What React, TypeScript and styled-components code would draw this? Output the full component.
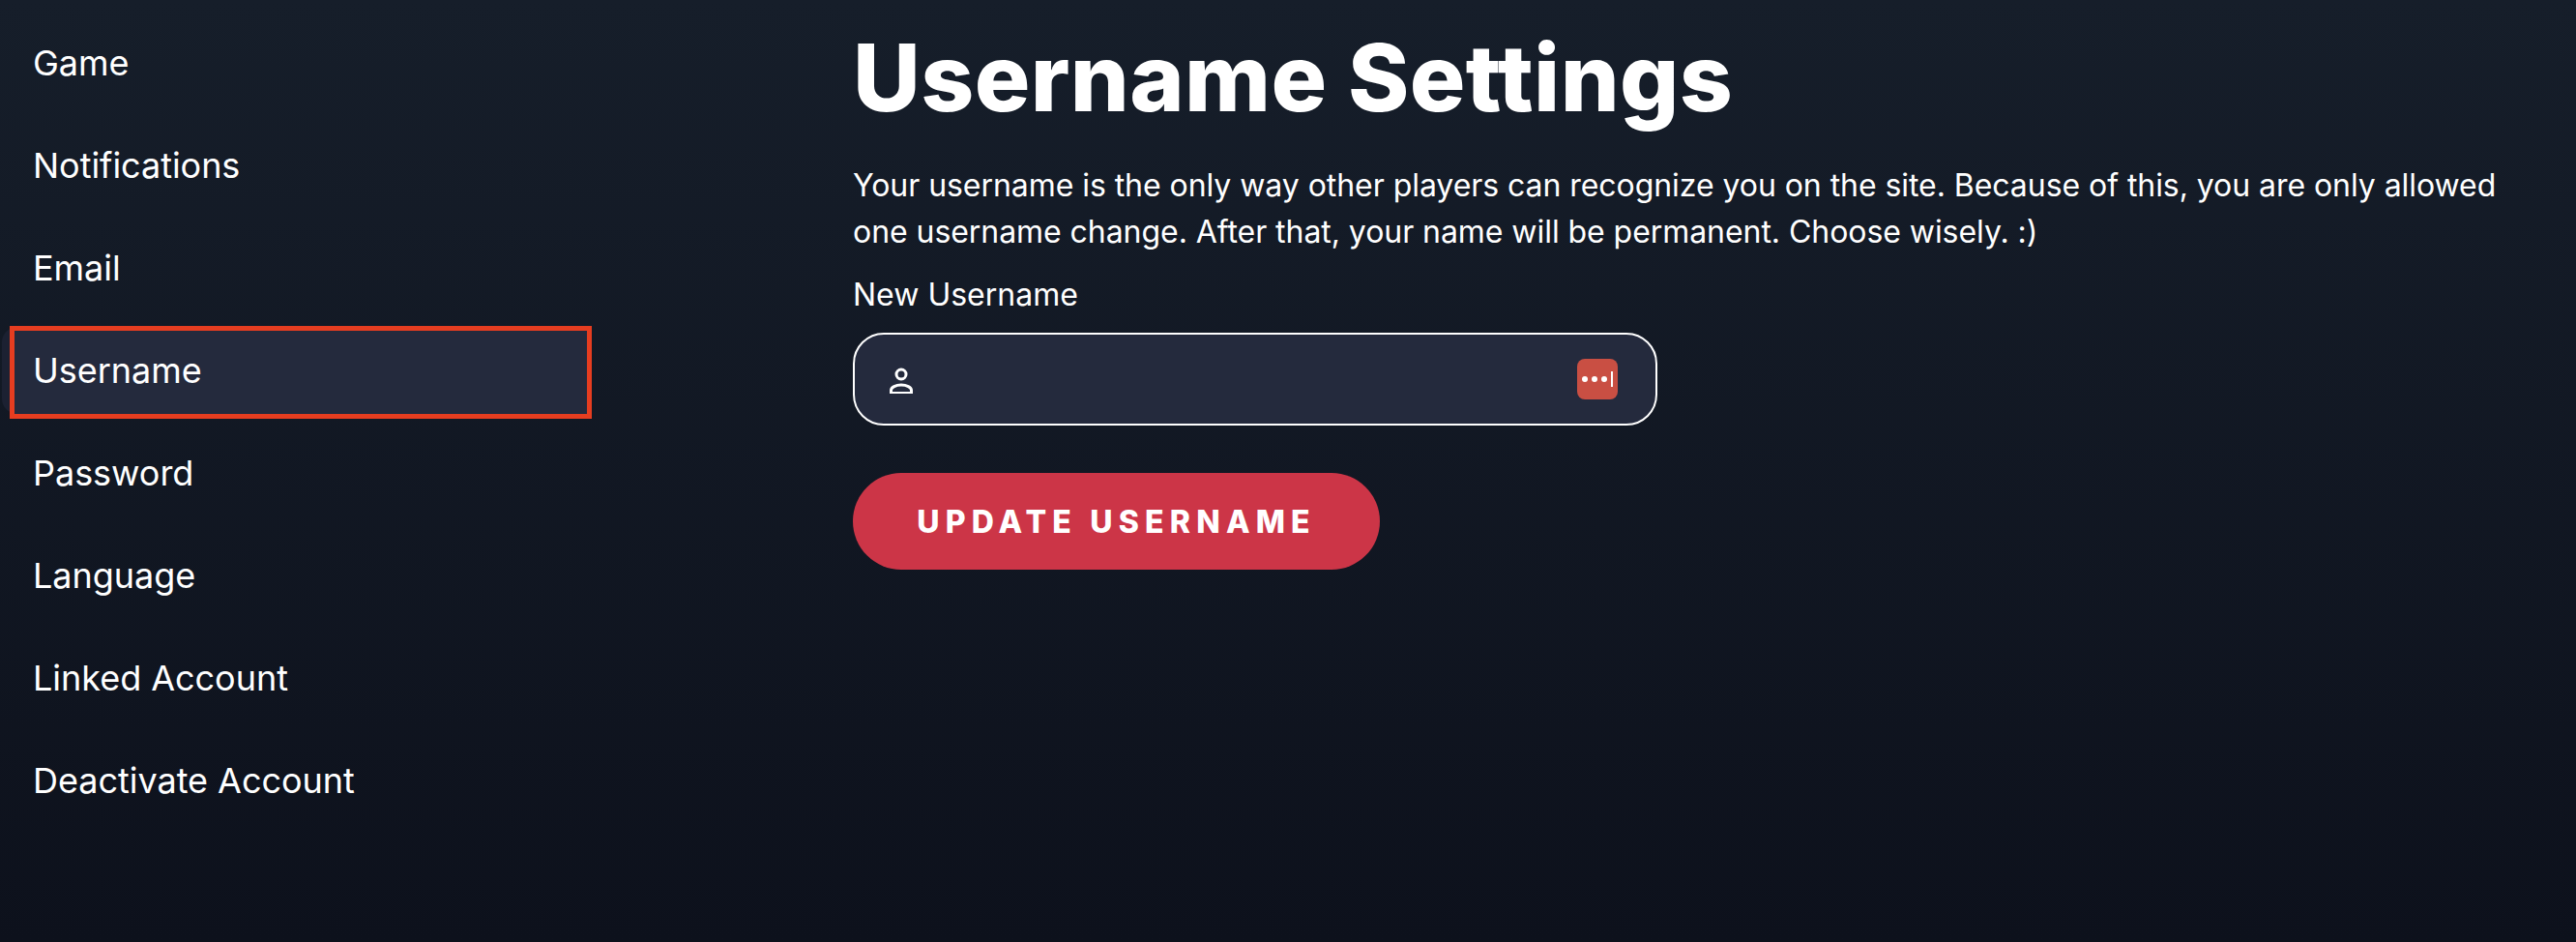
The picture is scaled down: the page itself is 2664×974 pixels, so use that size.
import * as React from "react";
import styled, { createGlobalStyle } from "styled-components";

const GlobalStyle = createGlobalStyle`
  html, body {
    margin: 0;
    padding: 0;
    background: #0d111c;
  }
  * {
    box-sizing: border-box;
  }
`;

const menuItems = [
  "Game",
  "Notifications",
  "Email",
  "Username",
  "Password",
  "Language",
  "Linked Account",
  "Deactivate Account",
];

const Page = styled.div`
  display: flex;
  width: 2664px;
  height: 974px;
  overflow: hidden;
  color: #fff;
  font-family: Inter, "Liberation Sans", sans-serif;
  background: linear-gradient(180deg, #161e2a 0%, #0d111c 100%);
`;

const Sidebar = styled.nav`
  display: flex;
  flex-direction: column;
  gap: 16px;
  width: 882px;
  padding: 20px 0 0 2px;
`;

const MenuItem = styled.div<{ $active?: boolean }>`
  position: relative;
  display: flex;
  align-items: center;
  width: 608px;
  height: 90px;
  padding-left: 32px;
  font-size: 36px;
  letter-spacing: -0.03px;
  border-radius: 16px;
  background: ${(p) =>
    p.$active ? "linear-gradient(90deg, #1c2132 8px, #242a3d 8px)" : "transparent"};

  ${(p) =>
    p.$active &&
    `
    &::after {
      content: "";
      position: absolute;
      top: -1px;
      left: 8px;
      right: -2px;
      bottom: -5px;
      border: 5px solid #e63d20;
      background: #242a3d;
      z-index: 0;
    }
  `}
`;

const MenuLabel = styled.span`
  position: relative;
  z-index: 1;
`;

const Main = styled.main`
  display: flex;
  flex-direction: column;
  flex: 1;
  padding-right: 60px;
`;

const Title = styled.h1`
  margin: 22px 0 0;
  font-size: 96px;
  line-height: 116px;
  font-weight: 800;
  letter-spacing: 0.4px;
`;

const Description = styled.p`
  margin: 30px 0 0;
  font-size: 32px;
  line-height: 48px;
  font-weight: 400;
  letter-spacing: -0.055px;
`;

const FieldLabel = styled.label`
  display: block;
  margin-top: 17px;
  font-size: 32px;
  line-height: 48px;
`;

const InputBox = styled.div`
  display: flex;
  align-items: center;
  justify-content: space-between;
  width: 832px;
  height: 96px;
  margin-top: 15px;
  padding: 0 39px 0 35px;
  border: 2px solid #fff;
  border-radius: 32px;
  background: #242a3d;
`;

const SubmitButton = styled.button`
  width: 545px;
  height: 100px;
  margin-top: 49px;
  padding: 0;
  border: none;
  border-radius: 50px;
  background: #cc3547;
  color: #fff;
  font-family: Inter, "Liberation Sans", sans-serif;
  font-size: 32px;
  font-weight: 800;
  letter-spacing: 6.2px;
`;

const UserIcon = () => (
  <svg width="26" height="30" viewBox="0 -2 26 30" fill="none" stroke="#fff" strokeWidth="3">
    <circle cx="13" cy="8" r="5" />
    <path d="M2.500 27.500v-3c0-3 5-5.500 10.500-5.500s10.500 2.500 10.500 5.500v3z" />
  </svg>
);

const PasswordManagerIcon = () => (
  <svg width="42" height="42" viewBox="0 0 42 42">
    <rect width="42" height="42" rx="8" fill="#c94f43" />
    <circle cx="8" cy="21" r="3" fill="#fff" />
    <circle cx="18" cy="21" r="3" fill="#fff" />
    <circle cx="28" cy="21" r="3" fill="#fff" />
    <rect x="35" y="13" width="2" height="16" fill="#fff" />
  </svg>
);

export default function App() {
  return (
    <Page>
      <GlobalStyle />
      <Sidebar>
        {menuItems.map((item) => (
          <MenuItem key={item} $active={item === "Username"}>
            <MenuLabel>{item}</MenuLabel>
          </MenuItem>
        ))}
      </Sidebar>
      <Main>
        <Title>Username Settings</Title>
        <Description>
          Your username is the only way other players can recognize you on the site. Because of
          this, you are only allowed one username change. After that, your name will be permanent.
          Choose wisely. :)
        </Description>
        <FieldLabel>New Username</FieldLabel>
        <InputBox>
          <UserIcon />
          <PasswordManagerIcon />
        </InputBox>
        <SubmitButton>UPDATE USERNAME</SubmitButton>
      </Main>
    </Page>
  );
}
